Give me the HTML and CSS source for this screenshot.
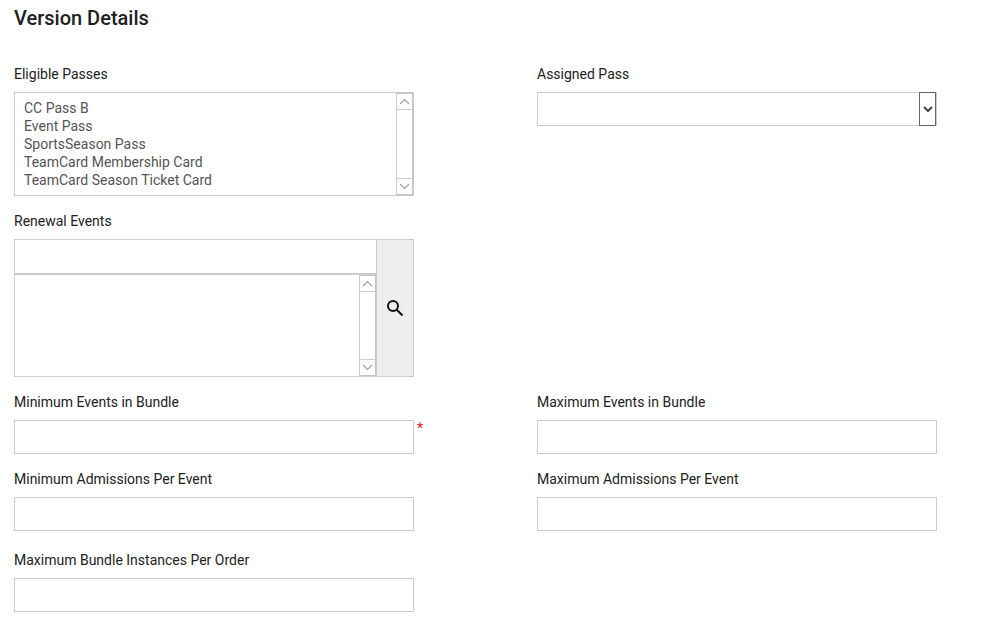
FILE: index.html
```html
<!DOCTYPE html>
<html lang="en">
<head>
    <meta charset="UTF-8">
    <title>Version Details</title>
    <link rel="stylesheet" href="styles.css">
</head>
<body>
    <h1 class="title">Version Details</h1>
    <form class="details">
        <div class="row row-first">
            <div class="field">
                <label class="field-label">Eligible Passes</label>
                <div class="listbox listbox-passes">
                    <ul class="options">
                        <li>CC Pass B</li>
                        <li>Event Pass</li>
                        <li>SportsSeason Pass</li>
                        <li>TeamCard Membership Card</li>
                        <li>TeamCard Season Ticket Card</li>
                    </ul>
                    <div class="scrollbar">
                        <span class="scroll-btn"><svg width="11" height="7" viewBox="0 0 11 7"><path d="M1 6 L5.5 1.5 L10 6" /></svg></span>
                        <span class="scroll-track"></span>
                        <span class="scroll-btn scroll-btn-down"><svg width="11" height="7" viewBox="0 0 11 7"><path d="M1 1 L5.5 5.5 L10 1" /></svg></span>
                    </div>
                </div>
            </div>
            <div class="field">
                <label class="field-label">Assigned Pass</label>
                <div class="dropdown">
                    <span class="dropdown-btn"><svg width="10" height="6" viewBox="0 0 10 6"><path d="M1 1 L5 5 L9 1" /></svg></span>
                </div>
            </div>
        </div>

        <div class="row">
            <div class="field">
                <label class="field-label">Renewal Events</label>
                <div class="picker">
                    <div class="picker-main">
                        <input class="picker-input" type="text">
                        <div class="listbox listbox-events">
                            <div class="options"></div>
                            <div class="scrollbar">
                                <span class="scroll-btn"><svg width="11" height="7" viewBox="0 0 11 7"><path d="M1 6 L5.5 1.5 L10 6" /></svg></span>
                                <span class="scroll-track"></span>
                                <span class="scroll-btn scroll-btn-down"><svg width="11" height="7" viewBox="0 0 11 7"><path d="M1 1 L5.5 5.5 L10 1" /></svg></span>
                            </div>
                        </div>
                    </div>
                    <div class="picker-search">
                        <svg width="18" height="18" viewBox="0 0 18 18"><circle cx="7" cy="7" r="5" /><path d="M10.8 10.8 L16.5 16.5" /></svg>
                    </div>
                </div>
            </div>
        </div>

        <div class="row">
            <div class="field">
                <label class="field-label">Minimum Events in Bundle</label>
                <div class="required-wrap">
                    <input class="text-input" type="text">
                    <span class="required-mark">*</span>
                </div>
            </div>
            <div class="field">
                <label class="field-label">Maximum Events in Bundle</label>
                <input class="text-input" type="text">
            </div>
        </div>

        <div class="row">
            <div class="field">
                <label class="field-label">Minimum Admissions Per Event</label>
                <input class="text-input" type="text">
            </div>
            <div class="field">
                <label class="field-label">Maximum Admissions Per Event</label>
                <input class="text-input" type="text">
            </div>
        </div>

        <div class="row row-last">
            <div class="field">
                <label class="field-label">Maximum Bundle Instances Per Order</label>
                <input class="text-input" type="text">
            </div>
        </div>
    </form>
</body>
</html>
```

FILE: styles.css
```css
* {
    box-sizing: border-box;
}

html, body {
    overflow: hidden;
}

body {
    margin: 0;
    padding: 0 0 0 14px;
    background-color: #fff;
    font-family: Roboto, 'Liberation Sans', sans-serif;
    font-size: 14px;
    color: #222;
}

.title {
    margin: 0;
    padding-top: 6px;
    height: 65px;
    font-size: 20px;
    line-height: 24px;
    font-weight: 500;
    color: #212121;
}

.row {
    display: grid;
    grid-template-columns: 400px 400px;
    column-gap: 123px;
    margin-top: 16px;
}

.row-first {
    margin-top: 0;
}

.row-last {
    margin-top: 20px;
}

.field-label {
    display: block;
    height: 18px;
    line-height: 18px;
    margin-bottom: 9px;
}

.text-input {
    display: block;
    width: 400px;
    height: 34px;
    padding: 0 10px;
    border: 1px solid #ccc;
    background-color: #fff;
}

.required-wrap {
    position: relative;
}

.required-mark {
    position: absolute;
    left: 403px;
    top: 0;
    font-size: 14px;
    line-height: 16px;
    color: #e8112d;
}

/* list boxes */
.listbox {
    display: flex;
    border: 1px solid #ccc;
    background-color: #fff;
}

.listbox-passes {
    width: 400px;
    height: 104px;
}

.listbox-events {
    height: 104px;
    border-top-width: 2px;
}

.options {
    flex: 1;
    margin: 0;
    padding: 6px 9px;
    list-style: none;
    line-height: 18px;
    color: #555;
}

.scrollbar {
    display: flex;
    flex-direction: column;
    width: 17px;
    border-left: 1px solid #ccc;
    border-right: 1px solid #c4c4c4;
    border-top: 1px solid #c4c4c4;
    border-bottom: 1px solid #c4c4c4;
}

.scroll-btn {
    display: flex;
    align-items: center;
    justify-content: center;
    height: 16px;
    border-bottom: 1px solid #ccc;
}

.scroll-btn-down {
    border-bottom: 0;
    border-top: 1px solid #ccc;
}

.scroll-track {
    flex: 1;
}

.scroll-btn svg path {
    fill: none;
    stroke: #a0a0a0;
    stroke-width: 1.2;
}

/* assigned pass dropdown */
.dropdown {
    display: flex;
    justify-content: flex-end;
    width: 400px;
    height: 34px;
    border: 1px solid #ccc;
}

.dropdown-btn {
    display: flex;
    align-items: center;
    justify-content: center;
    width: 17px;
    margin: -1px 0;
    border: 1px solid #666;
}

.dropdown-btn svg path {
    fill: none;
    stroke: #444;
    stroke-width: 2;
}

/* renewal events picker */
.picker {
    display: flex;
    width: 400px;
    height: 138px;
}

.picker-main {
    display: flex;
    flex-direction: column;
    width: 363px;
}

.picker-input {
    display: block;
    width: 100%;
    height: 34px;
    border: 1px solid #ccc;
    border-bottom: 0;
    background-color: #fff;
}

.picker-search {
    display: flex;
    align-items: center;
    justify-content: center;
    flex: 1;
    background-color: #eee;
    border: 1px solid #ccc;
    border-left: 0;
}

.picker-search svg {
    margin-top: -1px;
}

.picker-search svg circle,
.picker-search svg path {
    fill: none;
    stroke: #111;
    stroke-width: 2;
}
```
